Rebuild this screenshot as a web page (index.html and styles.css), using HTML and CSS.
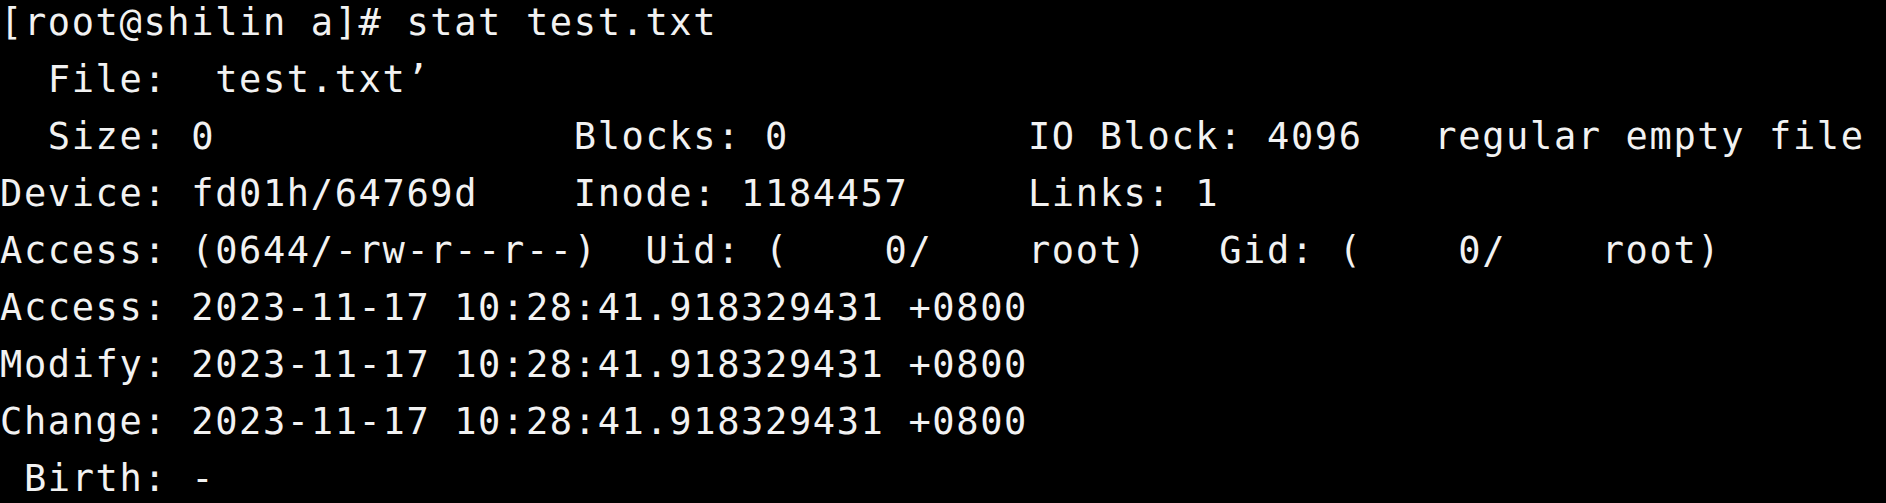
FILE: index.html
```html
<!DOCTYPE html>
<html lang="en">
<head>
<meta charset="utf-8">
<title>stat test.txt</title>
<link rel="stylesheet" href="styles.css">
</head>
<body>
<main class="terminal">
<div class="line">[root@shilin a]# stat test.txt</div>
<div class="line">  File:  test.txt’</div>
<div class="line">  Size: 0               Blocks: 0          IO Block: 4096   regular empty file</div>
<div class="line">Device: fd01h/64769d    Inode: 1184457     Links: 1</div>
<div class="line">Access: (0644/-rw-r--r--)  Uid: (    0/    root)   Gid: (    0/    root)</div>
<div class="line">Access: 2023-11-17 10:28:41.918329431 +0800</div>
<div class="line">Modify: 2023-11-17 10:28:41.918329431 +0800</div>
<div class="line">Change: 2023-11-17 10:28:41.918329431 +0800</div>
<div class="line"> Birth: -</div>
</main>
</body>
</html>
```
FILE: styles.css
```css
html, body {
  margin: 0;
  padding: 0;
  background: #000000;
  height: 100%;
  overflow: hidden;
}

.terminal {
  margin-top: -6px;
  font-family: "DejaVu Sans Mono", "Liberation Mono", monospace;
  font-size: 37px;
  letter-spacing: 1.63px;
  line-height: 57px;
  color: #f2f2f2;
}

.line {
  white-space: pre;
  height: 57px;
}
```
